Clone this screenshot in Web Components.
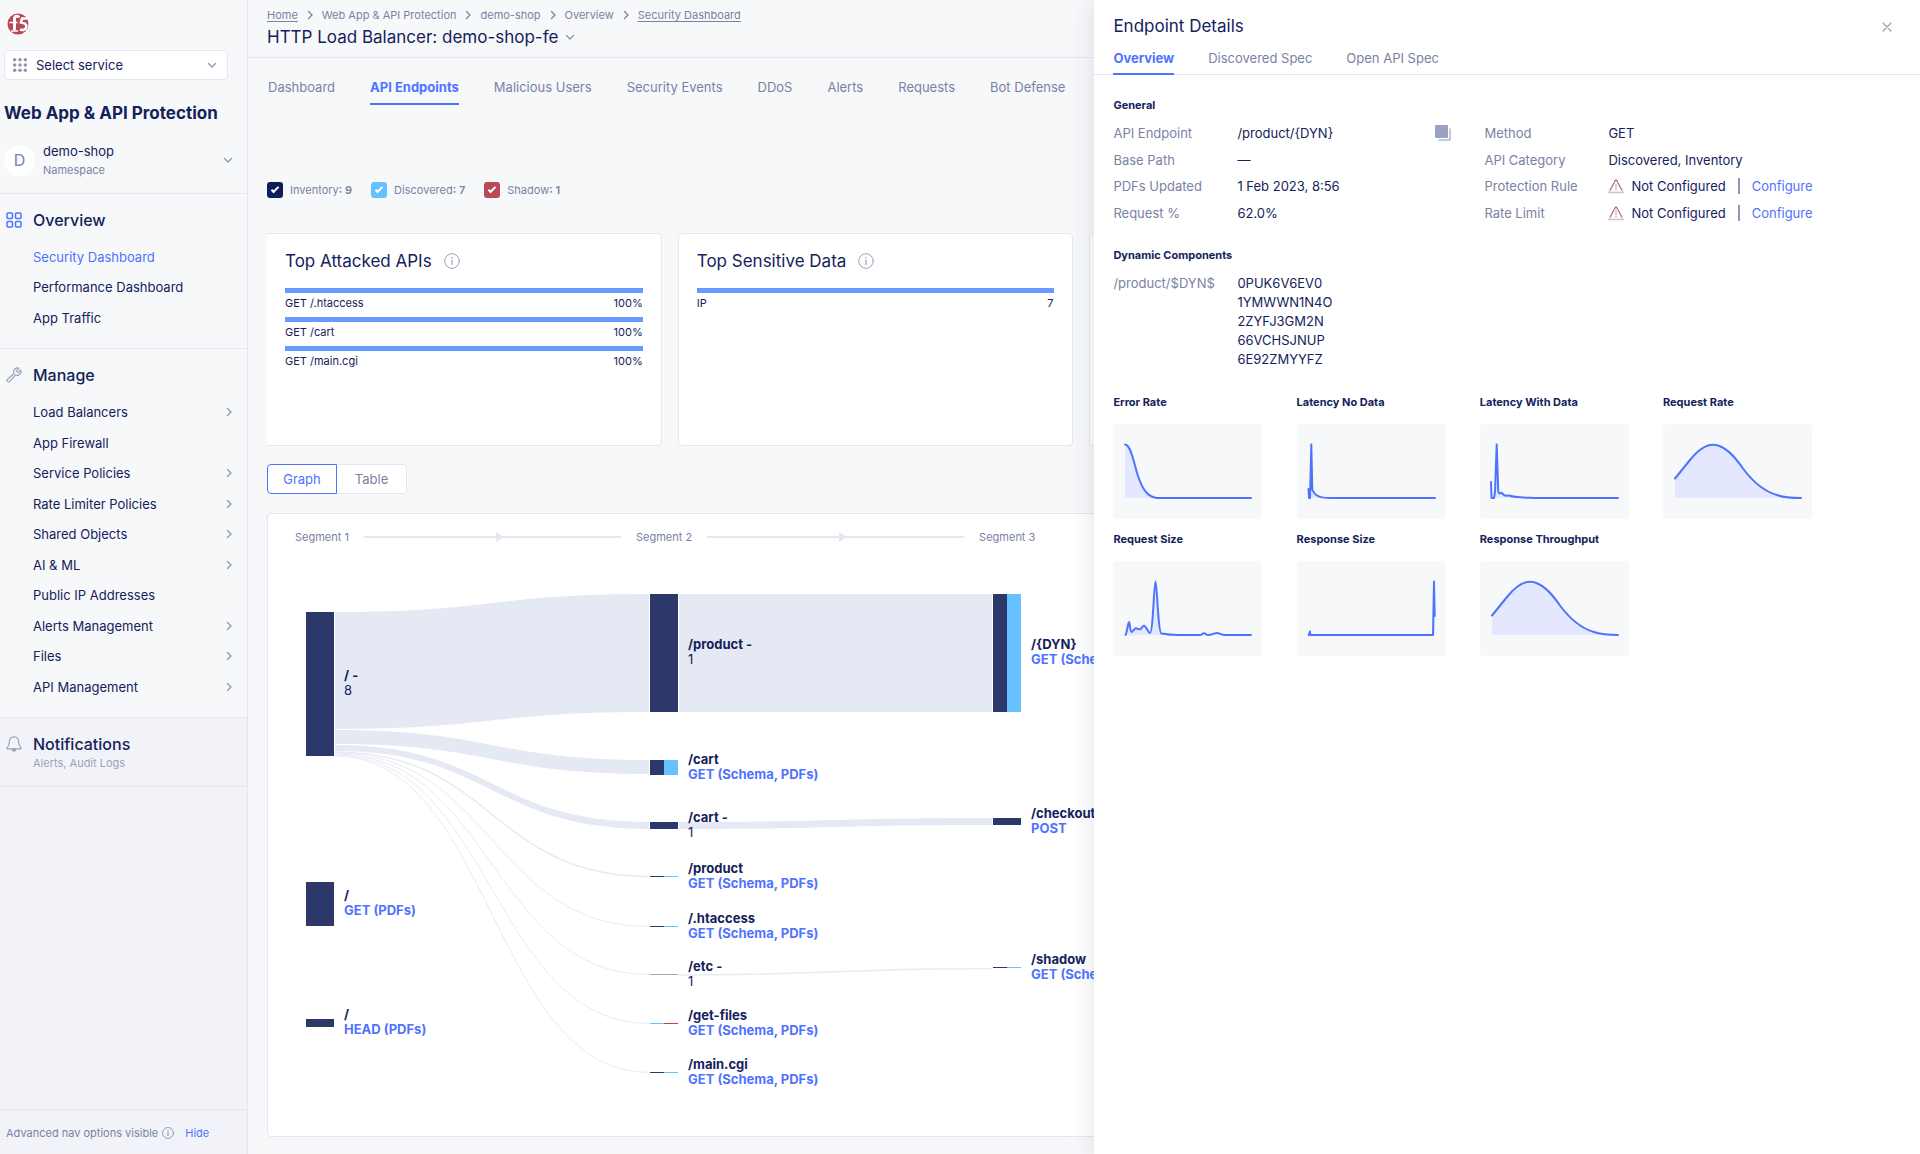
<!DOCTYPE html>
<html lang="en">
<head>
<meta charset="utf-8">
<title>Security Dashboard</title>
<style>
  :root {
    --ink: #14225b; --muted: #7a82a4; --blue: #4f73ff; --line: #e4e7f2;
    --page: #f7f8fa; --navy: #2c386a; --sky: #67c1ff; --red: #b94a55;
  }
  html, body { margin: 0; height: 100%; }
  body { font-family: Inter, "Liberation Sans", sans-serif; font-size: 13px; color: var(--ink); background: var(--page); overflow: hidden; }
</style>
</head>
<body>
<app-shell>
  <side-nav slot="nav"></side-nav>
  <page-header slot="main"></page-header>
  <page-tabs slot="main"></page-tabs>
  <source-filter slot="main"></source-filter>
  <card-row slot="main">
    <rank-card heading="Top Attacked APIs" flush>
      <rank-item name="GET /.htaccess" value="100%"></rank-item>
      <rank-item name="GET /cart" value="100%"></rank-item>
      <rank-item name="GET /main.cgi" value="100%"></rank-item>
    </rank-card>
    <rank-card heading="Top Sensitive Data">
      <rank-item name="IP" value="7"></rank-item>
    </rank-card>
    <rank-card></rank-card>
    <rank-card></rank-card>
  </card-row>
  <view-toggle slot="main"></view-toggle>
  <endpoint-graph slot="main"></endpoint-graph>
  <endpoint-drawer slot="drawer"></endpoint-drawer>
</app-shell>

<script>
const RESET = `
  :host, *, *::before, *::after { box-sizing: border-box; }
  button { font: inherit; color: inherit; background: none; border: 0; padding: 0; margin: 0; text-align: left; cursor: pointer; }
  ul, dl, dd, dt, h1, h2, h3, p, ol { margin: 0; padding: 0; list-style: none; font: inherit; }
  a { color: inherit; text-decoration: none; }
  svg { display: block; flex: none; }
`;
function define(name, render) {
  customElements.define(name, class extends HTMLElement {
    connectedCallback() {
      if (this.shadowRoot) return;
      const t = document.createElement('template');
      t.innerHTML = '<style>' + RESET + '</style>' + render(this);
      this.attachShadow({ mode: 'open' }).append(t.content.cloneNode(true));
    }
  });
}

/* small line icons, one element with a name attribute */
const ICONS = {
  down: [12, 12, '<path d="M2.500 4.500L6 8l3.500-3.500" stroke-width="1.300"/>'],
  right: [8, 10, '<path d="M2.500 1.500L6 5 2.500 8.500" stroke-width="1.300"/>'],
  dots: [18, 18, [2, 8, 14].map(y => [3, 9, 15].map(x => `<circle cx="${x}" cy="${y + 1}" r="2" fill="currentColor" stroke="none"/>`).join('')).join('')],
  grid: [16, 16, '<rect x="1" y="1" width="5.500" height="5.500" rx="1"/><rect x="9.500" y="1" width="5.500" height="5.500" rx="1"/><rect x="1" y="9.500" width="5.500" height="5.500" rx="1"/><rect x="9.500" y="9.500" width="5.500" height="5.500" rx="1"/>'],
  wrench: [16, 16, '<path d="M13 1.200a4 4 0 0 0-5 5.300L1.600 12.200a1.500 1.500 0 0 0 2.200 2.200L9.500 8a4 4 0 0 0 5.300-5l-2.300 2.300-1.500-.3-.3-1.500z" stroke-width="1.200" stroke-linejoin="round"/>'],
  bell: [16, 16, '<path d="M8 .8c-3 0-4.600 2.200-4.600 4.800 0 3-.9 4.600-2.200 6.100-.4.500-.2 1.100.4 1.100h12.800c.6 0 .8-.6.4-1.100-1.300-1.500-2.200-3.100-2.200-6.100C12.600 3 11 .8 8 .8z" stroke-width="1.200"/><path d="M6.500 13.500a1.500 1.500 0 0 0 3 0z" fill="currentColor"/>'],
  info: [16, 16, '<circle cx="8" cy="8" r="7.300" stroke-width="1"/><path d="M8 7v4.500" stroke-width="1.200"/><circle cx="8" cy="4.700" r=".8" fill="currentColor" stroke="none"/>'],
  close: [12, 12, '<path d="M2 2l8 8M10 2l-8 8" stroke-width="1.200"/>'],
  copy: [18, 18, '<rect x="1" y="1" width="13" height="13" rx="1" fill="currentColor" stroke="none"/><path d="M16 5v11h-11" stroke-width="1.500" opacity=".8"/>'],
  warn: [16, 16, '<path d="M8 1.500L15 14.500H1z" stroke="#cfc0ba" stroke-width="1.500" stroke-linejoin="round"/><path d="M7.300 2.300L1.700 12.700M8.700 2.300L14.300 12.700" stroke="#b94a55" stroke-width="1" stroke-dasharray="1.500 1.500"/><path d="M8 6v4M8 11.300v1" stroke="#c4b8b8" stroke-width="1.200"/>'],
};
define('ui-icon', el => {
  const [w, h, body] = ICONS[el.getAttribute('name')];
  const s = Number(el.getAttribute('size')) || w;
  return `<style>:host { display: block; flex: none; }</style>
    <svg width="${s}" height="${Math.round(s * h / w)}" viewBox="0 0 ${w} ${h}" fill="none" stroke="currentColor" stroke-width="1.500" stroke-linecap="round" aria-hidden="true">${body}</svg>`;
});

define('app-shell', () => `
  <style>
    :host { display: flex; height: 100vh; position: relative; overflow: hidden; }
    aside { flex: 0 0 248px; border-right: 1px solid var(--line); display: flex; flex-direction: column; }
    main { flex: 1; min-width: 0; display: flex; flex-direction: column; }
  </style>
  <aside><slot name="nav"></slot></aside>
  <main><slot name="main"></slot></main>
  <slot name="drawer"></slot>`);

define('side-nav', () => {
  const items = (list) => list.map(([label, more, on]) =>
    `<li><a href="#" class="${on ? 'on' : ''}">${label}${more ? '<ui-icon name="right"></ui-icon>' : ''}</a></li>`).join('');
  return `
  <style>
    :host { flex: 1; display: flex; flex-direction: column; }
    .logo { display: block; margin: 12px 0 0 6px; width: 26px; height: 24px; }
    .select { display: flex; align-items: center; height: 30px; margin: 14px 19px 0 4px; background: #fff; border: 1px solid var(--line); border-radius: 4px; padding: 0 9px 0 7px; color: #8f96b3; }
    select { flex: 1; min-width: 0; margin-left: 4px; height: 28px; appearance: none; border: 0; background: none; color: var(--ink); font: 13px Inter, sans-serif; padding: 0 4px; }
    h1 { font-size: 17px; font-weight: 700; line-height: 24px; margin: 21px 0 0 4px; white-space: nowrap; }
    .ns { display: flex; align-items: center; margin: 14px 13px 0 4px; height: 42px; }
    .avatar { width: 31px; height: 31px; border-radius: 50%; background: #fff; color: var(--muted); font-size: 16px; display: grid; place-items: center; margin-right: 8px; }
    .ns b { display: block; font-weight: 400; font-size: 13px; line-height: 20px; }
    .ns small { display: block; font-size: 11px; line-height: 18px; color: var(--muted); }
    .ns ui-icon { margin-left: auto; color: #8f96b3; }
    .ns + section { margin-top: 12px; }
    section { border-top: 1px solid var(--line); padding: 15px 14px 15px 6px; }
    h2 { display: flex; align-items: center; gap: 11px; font-size: 16px; font-weight: 500; line-height: 22px; color: var(--ink); }
    h2 ui-icon { color: #9ba1b8; }
    h2.on ui-icon { color: var(--blue); }
    ul { display: grid; grid-auto-rows: 1fr; margin: 11px 0 0 27px; }
    .three { height: 91px; } .ten { height: 305px; }
    li a { display: flex; align-items: center; justify-content: space-between; height: 100%; }
    li ui-icon { color: #8f96b3; }
    .on { color: var(--blue); }
    .tail { flex: 1; display: flex; flex-direction: column; background: #f2f3f8; }
    .tail p { margin: 0 0 0 27px; font-size: 11px; line-height: 16px; color: #9ba1b8; }
    footer { margin-top: auto; border-top: 1px solid var(--line); height: 45px; display: flex; align-items: center; padding: 2px 0 0 6px; font-size: 11px; color: var(--muted); }
    footer ui-icon { margin: 0 11px 0 4px; }
    footer button { color: var(--blue); }
    .note { border-bottom: 1px solid var(--line); padding-bottom: 15px; }
  </style>
  <svg class="logo" viewBox="0 0 26 24" role="img" aria-label="f5">
    <circle cx="12" cy="12" r="10.500" fill="#b94a55"/>
    <g fill="none" stroke="#fff">
      <path d="M13 5.500c-1-2-4.500-2-4.500 1.500v11" stroke-width="2.800"/><path d="M3.500 10.500h8M5 19h7" stroke-width="1.600"/>
      <path d="M22 6.500h-6l-1 4c4 .5 6 2 5.300 4.500-.6 2.800-3.500 3.500-6.300 2.500" stroke-width="2.600"/>
    </g>
    <circle cx="23.500" cy="18.500" r=".8" fill="#c6c9d6"/>
  </svg>
  <label class="select"><ui-icon name="dots" size="16"></ui-icon>
    <select aria-label="Select service"><option>Select service</option></select><ui-icon name="down"></ui-icon></label>
  <h1>Web App &amp; API Protection</h1>
  <button class="ns"><span class="avatar">D</span><span><b>demo-shop</b><small>Namespace</small></span><ui-icon name="down"></ui-icon></button>
  <section><h2 class="on"><ui-icon name="grid"></ui-icon><span style="color:var(--ink)">Overview</span></h2>
    <ul class="three">${items([['Security Dashboard', 0, 1], ['Performance Dashboard'], ['App Traffic']])}</ul></section>
  <section><h2><ui-icon name="wrench"></ui-icon>Manage</h2>
    <ul class="ten">${items([['Load Balancers', 1], ['App Firewall'], ['Service Policies', 1], ['Rate Limiter Policies', 1], ['Shared Objects', 1], ['AI &amp; ML', 1], ['Public IP Addresses'], ['Alerts Management', 1], ['Files', 1], ['API Management', 1]])}</ul></section>
  <div class="tail">
    <section class="note"><h2><ui-icon name="bell"></ui-icon>Notifications</h2><p>Alerts, Audit Logs</p></section>
    <footer>Advanced nav options visible<ui-icon name="info" size="12"></ui-icon><button>Hide</button></footer>
  </div>`;
});

define('page-header', () => `
  <style>
    :host { display: block; height: 58px; flex: none; border-bottom: 1px solid var(--line); padding: 7px 0 0 19px; }
    ol { display: flex; align-items: center; gap: 8px; font-size: 11px; line-height: 16px; color: var(--muted); }
    ol a { text-decoration: underline; text-underline-offset: 2px; }
    button { display: flex; align-items: center; gap: 6px; font-size: 17px; line-height: 26px; margin-top: 1px; }
    button ui-icon { color: #8f96b3; }
  </style>
  <nav aria-label="Breadcrumb"><ol>${['<a href="#">Home</a>', 'Web App &amp; API Protection', 'demo-shop', 'Overview', '<a href="#">Security Dashboard</a>'].map(t => `<li>${t}</li>`).join('<ui-icon name="right"></ui-icon>')}</ol></nav>
  <h1><button>HTTP Load Balancer: demo-shop-fe<ui-icon name="down"></ui-icon></button></h1>`);

define('page-tabs', () => `
  <style>
    :host { display: block; flex: none; height: 124px; padding: 18px 0 0 20px; }
    div { display: flex; gap: 35px; color: var(--muted); }
    button { height: 29px; padding-bottom: 5px; line-height: 20px; border-bottom: 2px solid transparent; white-space: nowrap; }
    .on { color: var(--blue); border-color: var(--blue); font-weight: 700; }
  </style>
  <div role="tablist">${['Dashboard', 'API Endpoints', 'Malicious Users', 'Security Events', 'DDoS', 'Alerts', 'Requests', 'Bot Defense'].map((t, i) => `<button role="tab" class="${i === 1 ? 'on' : ''}">${t}</button>`).join('')}</div>`);

define('source-filter', () => `
  <style>
    :host { display: flex; flex: none; gap: 19px; padding-left: 19px; height: 51px; align-items: flex-start; font-size: 11px; line-height: 16px; color: var(--muted); }
    label { display: flex; gap: 7px; }
    b { font-weight: 600; }
    input { appearance: none; width: 16px; height: 16px; margin: 0; border-radius: 3px; background: var(--c); display: grid; place-items: center; }
    input::before { content: ""; width: 8px; height: 4px; margin-top: -2px; border: solid #fff; border-width: 0 0 2px 2px; transform: rotate(-45deg); }
  </style>
  ${[['Inventory', 9, '#0f1e57'], ['Discovered', 7, 'var(--sky)'], ['Shadow', 1, 'var(--red)']].map(([t, n, c]) =>
    `<label><input type="checkbox" checked style="--c:${c}"><span>${t}<b>: ${n}</b></span></label>`).join('')}`);

define('card-row', () => `
  <style>:host { display: grid; flex: none; grid-template-columns: repeat(4, minmax(0, 1fr)); gap: 16px; min-height: 213px; padding: 0 26px 0 19px; }</style><slot></slot>`);

define('rank-card', el => `
  <style>
    :host { display: block; background: #fff; border: 1px solid var(--line); border-radius: 4px; padding: 14px 18px 0; }
    :host([flush]) { border-left: 0; border-top-left-radius: 0; border-bottom-left-radius: 0; }
    h2 { display: flex; align-items: center; gap: 12px; font-size: 17px; line-height: 26px; margin-bottom: 14px; }
    h2 ui-icon { color: #9ba1b8; }
  </style>
  ${el.hasAttribute('heading') ? `<h2>${el.getAttribute('heading')}<ui-icon name="info"></ui-icon></h2>` : ''}<slot></slot>`);

define('rank-item', el => `
  <style>
    :host { display: block; height: 29px; font-size: 11px; line-height: 16px; }
    i { display: block; height: 5px; background: #6799ff; margin-bottom: 2px; }
    p { display: flex; justify-content: space-between; }
  </style>
  <i></i><p><span>${el.getAttribute('name')}</span><span>${el.getAttribute('value')}</span></p>`);

define('view-toggle', () => `
  <style>
    :host { display: flex; flex: none; padding: 18px 0 19px 19px; }
    button { height: 30px; width: 70px; text-align: center; background: #fff; border: 1px solid var(--line); border-left: 0; border-radius: 0 4px 4px 0; color: var(--muted); }
    .on { border: 1px solid var(--blue); color: var(--blue); border-radius: 4px 0 0 4px; }
  </style>
  <button class="on" aria-pressed="true">Graph</button><button aria-pressed="false">Table</button>`);

define('endpoint-graph', () => {
  const X = [38, 382, 725], W = 28, D = 'var(--navy)', S = 'var(--sky)', R = 'var(--red)';
  /* column, top, bottom, left colour, right colour, name, second line, is-link */
  const nodes = [
    [0, 52, 196, D, D, '/ -', '8'], [0, 322, 366, D, D, '/', 'GET (PDFs)', 1], [0, 459, 467, D, D, '/', 'HEAD (PDFs)', 1],
    [1, 34, 152, D, D, '/product -', '1'], [1, 200, 215, D, S, '/cart', 'GET (Schema, PDFs)', 1],
    [1, 262, 269, D, D, '/cart -', '1'], [1, 316, 317, D, S, '/product', 'GET (Schema, PDFs)', 1],
    [1, 366, 367, D, S, '/.htaccess', 'GET (Schema, PDFs)', 1], [1, 414, 415, '#a3a8c0', '#a3a8c0', '/etc -', '1'],
    [1, 463, 464, S, R, '/get-files', 'GET (Schema, PDFs)', 1], [1, 512, 513, D, S, '/main.cgi', 'GET (Schema, PDFs)', 1],
    [2, 34, 152, D, S, '/{DYN}', 'GET (Schema, PDFs)', 1], [2, 258, 265, D, D, '/checkout', 'POST', 1],
    [2, 407, 408, D, S, '/shadow', 'GET (Schema, PDFs)', 1]];
  const links = [
    [0, 52, 169, 34, 152], [0, 170, 184, 200, 214], [0, 185, 191, 262, 269],
    [1, 34, 152, 34, 152], [1, 262, 269, 258, 265]];
  const threads = [[0, 192, 316, 1.5], [0, 193, 366, 1], [0, 194, 414, 1], [0, 195, 463, 1], [0, 196, 512, 1], [1, 415, 408, 1.5]];
  const span = c => [X[c] + W + 1, X[c + 1] - 1, (X[c] + W + X[c + 1]) / 2];
  return `
  <style>
    :host { display: block; flex: 1; min-height: 0; margin: 0 24px 17px 19px; background: #fff; border: 1px solid var(--line); border-radius: 4px; overflow: hidden; }
    header { display: flex; align-items: center; gap: 15px; height: 46px; padding-left: 27px; font-size: 11px; color: var(--muted); white-space: nowrap; }
    header svg { color: var(--line); }
    text { font-size: 13px; fill: var(--ink); }
    .b { font-weight: 700; } a text { fill: var(--blue); font-weight: 700; }
  </style>
  <header>${[1, 2, 3].map(n => `<span>Segment ${n}</span>`).join('<svg width="257" height="10" viewBox="0 0 257 10" fill="currentColor"><path d="M0 4h257v2H0zM132 0l8 5-8 5z"/></svg>')}</header>
  <svg width="1100" height="570" viewBox="0 0 1100 570">
    ${links.map(([c, a, b, p, q]) => { const [x, y, m] = span(c); return `<path fill="#e5e9f3" d="M${x} ${a}C${m} ${a} ${m} ${p} ${y} ${p}V${q}C${m} ${q} ${m} ${b} ${x} ${b}z"/>`; }).join('')}
    ${threads.map(([c, a, p, w]) => { const [x, y, m] = span(c); return `<path fill="none" stroke="#e9ebf3" stroke-width="${w}" d="M${x} ${a}C${m} ${a} ${m} ${p + .5} ${y} ${p + .5}"/>`; }).join('')}
    ${nodes.map(([c, a, b, l, r, n, s, isLink]) => { const m = Math.round((a + b) / 2), t = X[c] + 38;
      const second = `<text x="${t}" y="${m + 11}">${s}</text>`;
      return `<rect x="${X[c]}" y="${a}" width="${W}" height="${b - a}" fill="${r}"/><rect x="${X[c]}" y="${a}" width="${W / 2}" height="${b - a}" fill="${l}"/>
        <text class="b" x="${t}" y="${m - 4}">${n}</text>${isLink ? `<a href="#">${second}</a>` : second}`; }).join('')}
  </svg>`;
});

define('spark-card', el => `
  <style>
    :host { display: block; }
    h3 { font-size: 11px; font-weight: 700; line-height: 16px; margin-bottom: 14px; white-space: nowrap; }
    div { background: #f7f8fa; border-radius: 4px; }
  </style>
  <h3>${el.getAttribute('heading')}</h3>
  <div><svg width="149" height="95" viewBox="0 0 149 95" fill="none" role="img" aria-label="${el.getAttribute('heading')}">
    <path d="${el.getAttribute('line')}L138 74H12z" fill="#e3e8ff"/>
    <path d="${el.getAttribute('line')}" stroke="#4f73ff" stroke-width="2" stroke-linejoin="round" stroke-linecap="round"/></svg></div>`);

define('endpoint-drawer', () => {
  const bell = 'M12 54.500L27 36C35 26 42 20.700 50 20.700C62 20.700 72 33 80 44.500C90 58 100 67 114 71C121 73.500 128 74 138 74';
  const charts = [
    ['Error Rate', 'M12 20.500C18 20.500 21 40 25 52C29 64 34 73 44 74H138'],
    ['Latency No Data', 'M11.500 65L12 74H13L14.300 20.500L15.300 66C17 68.500 18 71 21 72C24 73.800 28 74 34 74H138'],
    ['Latency With Data', 'M11 58L11.500 74H14L15 68L16.700 20.500L18.200 66Q18.500 71 20.500 69C22 68 23 71 25 71.500C27 72 28 71 30 71.800C34 73.500 40 73.500 55 74H138'],
    ['Request Rate', bell],
    ['Request Size', 'M12.500 74C14 72 15 61 16 61C17 61 17 71 18.500 71C20 71 21 67.300 23 67.300C25 68 26 68.500 27.500 68C29 67 29.500 64.700 31 64.700C33 64.700 35 72 37 72C40 72 41 20.500 42.500 20.500C44 20.500 45 72 48.500 72.500C54 73.500 60 74 66 74H87C89 74 89 72.300 91 72.300C93 72.300 93 74 95 74C99 74 101 72 104 72C107 72 108 74 112 74H138'],
    ['Response Size', 'M11.700 74L13 70.500L13.300 74H136L137 20.500L137.700 55'],
    ['Response Throughput', bell]];
  const missing = '<ui-icon name="warn"></ui-icon><span>Not Configured</span><i></i><a href="#">Configure</a>';
  const rows = [['API Endpoint', '/product/{DYN}<button aria-label="Copy"><ui-icon name="copy"></ui-icon></button>'], ['Method', 'GET'],
    ['Base Path', '—'], ['API Category', 'Discovered, Inventory'],
    ['PDFs Updated', '1 Feb 2023, 8:56'], ['Protection Rule', missing],
    ['Request %', '62.0%'], ['Rate Limit', missing]];
  return `
  <style>
    :host { position: absolute; top: 0; right: 0; bottom: 0; width: 43vw; background: #fff; box-shadow: -4px 0 20px rgba(40, 50, 100, .1); }
    header { border-bottom: 1px solid var(--line); padding: 14px 27px 0 19px; height: 75px; }
    .top { display: flex; justify-content: space-between; align-items: center; height: 24px; }
    h1 { font-size: 17px; line-height: 24px; }
    .top button { color: #9ba1b8; margin-top: 2px; }
    .tabs { display: flex; gap: 34px; margin-top: 10px; color: var(--muted); }
    .tabs button { height: 27px; line-height: 20px; padding-bottom: 5px; border-bottom: 2px solid transparent; }
    .tabs .on { color: var(--blue); font-weight: 700; border-color: var(--blue); }
    .body { padding: 22px 108px 0 19px; }
    h2 { font-size: 11px; font-weight: 700; line-height: 16px; }
    dl { display: grid; grid-template-columns: 124px 247px 124px 1fr; grid-auto-rows: 1fr; height: 106px; margin: 7px 0 21px; align-items: center; white-space: nowrap; }
    dt { color: var(--muted); }
    dd { display: flex; align-items: center; }
    dd button { margin: 0 32px 0 auto; color: #9ba1c0; }
    dd ui-icon { margin-right: 7px; } dd button ui-icon { margin: 0; }
    dd i { width: 2px; height: 16px; background: #8f96b3; margin: 0 12px; }
    dd a { color: var(--blue); }
    .dyn { display: flex; line-height: 19px; margin: 11px 0 25px; }
    .dyn p { flex: 0 0 124px; color: var(--muted); }
    .charts { display: grid; grid-template-columns: repeat(4, 149px); justify-content: space-between; row-gap: 12px; }
  </style>
  <header>
    <div class="top"><h1>Endpoint Details</h1><button aria-label="Close"><ui-icon name="close"></ui-icon></button></div>
    <div class="tabs" role="tablist"><button role="tab" class="on">Overview</button><button role="tab">Discovered Spec</button><button role="tab">Open API Spec</button></div>
  </header>
  <div class="body">
    <h2>General</h2>
    <dl>${rows.map(([k, v]) => `<dt>${k}</dt><dd>${v}</dd>`).join('')}</dl>
    <h2>Dynamic Components</h2>
    <div class="dyn"><p>/product/$DYN$</p><ul>${['0PUK6V6EV0', '1YMWWN1N4O', '2ZYFJ3GM2N', '66VCHSJNUP', '6E92ZMYYFZ'].map(v => `<li>${v}</li>`).join('')}</ul></div>
    <div class="charts">${charts.map(([h, d]) => `<spark-card heading="${h}" line="${d}"></spark-card>`).join('')}</div>
  </div>`;
});
</script>
</body>
</html>
